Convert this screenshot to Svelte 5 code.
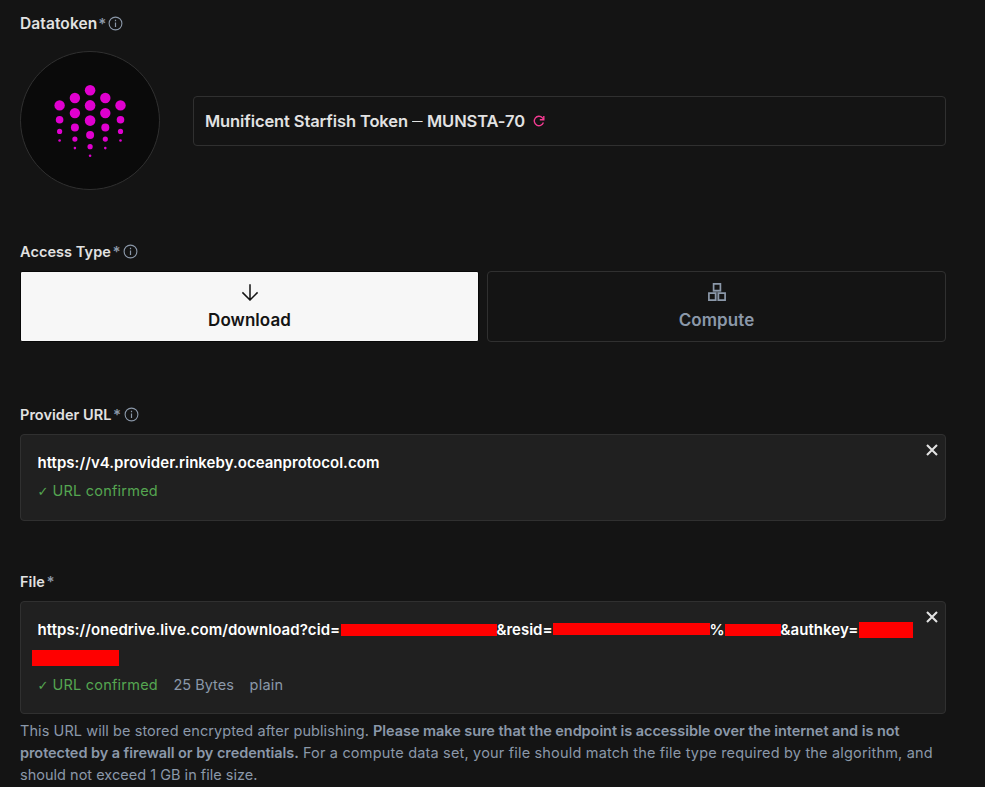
<script>
  // Columns of the token artwork: x, y of the first dot, and radii down the column
  const columns = [
    { x: 39.6, dots: [[54.4, 5.2], [68.7, 3.8], [80.4, 2.6], [89.5, 1.3]] },
    { x: 54.9, dots: [[47, 5.2], [62.1, 5.2], [76.5, 4], [88.1, 2.6], [97.1, 1.3]] },
    { x: 70.1, dots: [[39.2, 5.3], [54.4, 5.3], [69.6, 5.3], [84, 4], [95.7, 2.6], [104.8, 1.3]] },
    { x: 85.3, dots: [[47, 5.2], [62.1, 5.2], [76.5, 4], [88.1, 2.6], [97.1, 1.3]] },
    { x: 100.5, dots: [[54.4, 5.2], [68.7, 3.8], [80.4, 2.6], [89.5, 1.3]] }
  ];
</script>

{#snippet label(text, spacing, info)}
  <div class="label">
    <span style="letter-spacing:{spacing}px">{text}</span><span class="star">*</span>
    {#if info}
      <svg class="info" width="15" height="15" viewBox="0 0 15 15" fill="none" stroke="currentColor">
        <circle cx="7.5" cy="7.5" r="6.4" stroke-width="1.1" />
        <path d="M7.5 6.4V11M7.5 3.8V5.2" stroke-width="1.2" />
      </svg>
    {/if}
  </div>
{/snippet}

{#snippet close()}
  <button class="close" aria-label="Remove">
    <svg width="12" height="12" viewBox="0 0 12 12" stroke="currentColor" stroke-width="2.1" fill="none">
      <path d="M1 1L11 11M11 1L1 11" />
    </svg>
  </button>
{/snippet}

<main>
  <section class="datatoken">
    {@render label('Datatoken', 0.1, true)}
    <div class="token">
      <svg class="art" width="140" height="139" viewBox="0 0 140 139">
        <rect x="0.5" y="0.5" width="139" height="138" rx="69.5" ry="69" fill="#0a0a0a" stroke="#303030" />
        {#each columns as c}
          {#each c.dots as d}
            <circle cx={c.x} cy={d[0]} r={d[1]} fill="#e000cf" />
          {/each}
        {/each}
      </svg>
      <div class="tokenname">
        <span class="name">Munificent Starfish Token <i>—</i> MUNSTA-70</span>
        <svg width="12" height="12" viewBox="0 0 12 12" fill="none" stroke="#f33b91" stroke-width="1.4">
          <path d="M10.4 7.6A4.7 4.7 0 1 1 9.4 2.8L10.8 4.2" />
          <path d="M10.8 0.9V4.7H6.8" />
        </svg>
      </div>
    </div>
  </section>

  <section class="access">
    {@render label('Access Type', 0.07, true)}
    <div class="options">
      <div class="option selected">
        <svg width="18" height="18" viewBox="0 0 18 18" fill="none" stroke="currentColor" stroke-width="1.5">
          <path d="M9 1.2V17M1.4 9.4L9 17L16.6 9.4" />
        </svg>
        <span>Download</span>
      </div>
      <div class="option">
        <svg width="18" height="18" viewBox="0 0 18 18" fill="none" stroke="currentColor" stroke-width="1.7">
          <path d="M5.6 0.9H12.4V7.6H5.6ZM0.9 10.2H7.6V17.1H0.9ZM10.4 10.2H17.1V17.1H10.4Z" />
          <path d="M4.8 8.9H13.2M9 9V18" stroke-width="1.1" opacity="0.45" />
        </svg>
        <span>Compute</span>
      </div>
    </div>
  </section>

  <section class="provider">
    {@render label('Provider URL', 0.04, true)}
    <div class="box">
      <div class="url">https://v4.provider.rinkeby.oceanprotocol.com</div>
      <div class="meta"><span class="ok"><span class="tick">✓</span>URL confirmed</span></div>
      {@render close()}
    </div>
  </section>

  <section class="file">
    {@render label('File', 0.07, false)}
    <div class="box">
      <div class="url">
        <span class="u1">https://onedrive.live.com/download?cid=</span><span class="bar b1"></span><span class="u2">&amp;resid=</span><span class="bar b2"></span><span class="u3">%</span><span class="bar b3"></span><span class="u4">&amp;authkey=</span><span class="bar b4"></span>
      </div>
      <div class="rest"><span class="bar b5"></span></div>
      <div class="meta">
        <span class="ok"><span class="tick">✓</span>URL confirmed</span>
        <span class="bytes">25 Bytes</span>
        <span class="kind">plain</span>
      </div>
      {@render close()}
    </div>
    <p class="help">
      <span class="h1">This URL will be stored encrypted after publishing.</span>
      <b>Please make sure that the endpoint is accessible over the internet and is not<br />protected by a firewall or by credentials.</b>
      <span class="h2">For a compute data set, your file should match the file type required by the algorithm, and</span><br />
      <span class="h3">should not exceed 1 GB in file size.</span>
    </p>
  </section>
</main>

<style>
  :global(body) { background: #141414; }
  main {
    box-sizing: border-box;
    width: 985px;
    height: 787px;
    padding: 12px 39px 0 20px;
    overflow: hidden;
    background: #141414;
    color: #e2e2e2;
    font-family: Inter, 'Liberation Sans', sans-serif;
    font-size: 14.5px;
    white-space: nowrap;
  }
  .label {
    display: flex;
    align-items: center;
    height: 24px;
    margin-bottom: 7px;
    line-height: 24px;
    font-weight: 600;
  }
  .star { color: #8b98a9; font-size: 15px; line-height: 22px; margin: -1px 0 0 1.5px; width: 7px; }
  .info { margin: -1px 0 0 3.5px; color: #8b98a9; }
  .datatoken .label { margin-bottom: 15px; font-size: 15.5px; }
  .datatoken .star { margin-left: 1px; width: 6px; }
  .token { display: flex; align-items: center; height: 139px; }
  .art { flex: none; }
  .tokenname {
    box-sizing: border-box;
    display: flex;
    align-items: center;
    gap: 8px;
    flex: 1;
    height: 50px;
    margin-left: 33px;
    padding-left: 11px;
    border: 1px solid #303030;
    border-radius: 4px;
    font-size: 16.5px;
    font-weight: 600;
  }
  .name { letter-spacing: -0.04px; }
  .name i {
    display: inline-block;
    width: 11px;
    font-style: normal;
    font-weight: 300;
    transform: scaleX(0.64);
    transform-origin: 0 50%;
  }
  .name { width: 320px; letter-spacing: -0.11px; }
  .access { margin-top: 50px; }
  .options { display: flex; gap: 8px; }
  .option {
    box-sizing: border-box;
    display: flex;
    flex-direction: column;
    align-items: center;
    flex: 1;
    height: 71px;
    padding-top: 11px;
    border: 1px solid #303030;
    border-radius: 4px;
    color: #8b98a9;
    font-size: 17px;
    font-weight: 600;
    line-height: 20px;
    letter-spacing: 0.06px;
  }
  .option span { margin-top: 9px; }
  .selected { background: #f7f7f7; border-color: #080808; border-radius: 2px; color: #141414; }
  .provider { margin-top: 61px; }
  .file { margin-top: 49px; }
  .box {
    position: relative;
    box-sizing: border-box;
    height: 87px;
    padding: 16px 17px 0 16.5px;
    border: 1px solid #303030;
    border-radius: 4px;
    background: #202020;
  }
  .file .box { height: 113px; }
  .url {
    display: flex;
    align-items: center;
    height: 22px;
    color: #fff;
    font-size: 15px;
    font-weight: 600;
    letter-spacing: 0.04px;
  }
  .rest { display: flex; height: 28px; align-items: center; }
  .meta { display: flex; margin-top: 7px; line-height: 22px; color: #8b98a9; }
  .rest + .meta { margin-top: 6px; }
  .ok { width: 136px; color: #55a651; letter-spacing: 0.22px; }
  .tick {
    display: inline-block;
    width: 15px;
    font-family: 'DejaVu Sans', sans-serif;
    font-size: 13px;
    letter-spacing: 0;
  }
  .bytes { width: 76px; }
  .kind { letter-spacing: 0.27px; }
  .bar { flex: none; height: 12px; margin-top: 2px; background: #f00; }
  .u1 { width: 303px; letter-spacing: 0.06px; }
  .u2 { width: 56px; letter-spacing: 0; }
  .u3 { width: 15px; letter-spacing: -0.5px; }
  .u4 { width: 78px; letter-spacing: 0.06px; }
  .b1 { width: 156px; }
  .b2 { width: 157px; margin-top: 0; }
  .b3 { width: 56px; }
  .b4 { width: 54px; height: 16px; }
  .b5 { width: 87px; height: 16px; margin: 7px 0 0 -5.5px; }
  .close {
    position: absolute;
    top: 9px;
    right: 7px;
    display: flex;
    padding: 0;
    border: 0;
    background: none;
    color: #e2e2e2;
  }
  .help { margin: 6px 0 0; line-height: 22px; color: #8b98a9; }
  .h1 { letter-spacing: 0.07px; }
  .help b { font-weight: 600; letter-spacing: -0.06px; }
  .h2 { letter-spacing: 0.182px; }
  .h3 { letter-spacing: 0.015px; }
</style>
